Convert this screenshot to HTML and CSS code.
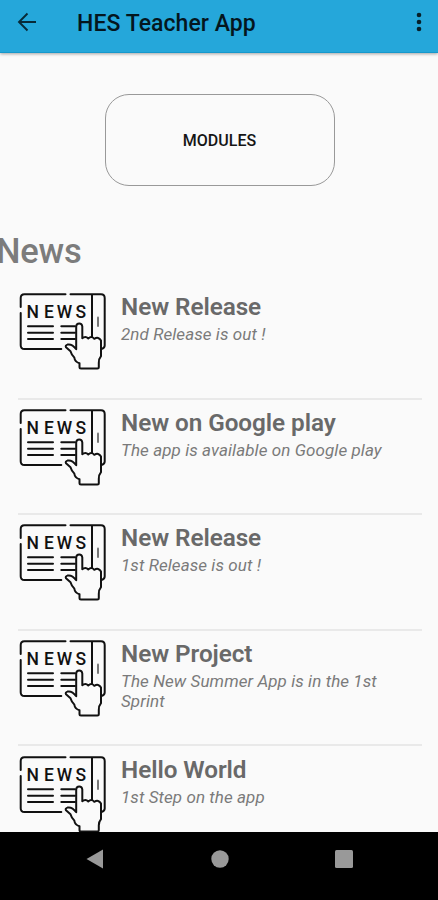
FILE: index.html
```html
<!DOCTYPE html>
<html lang="en">
<head>
<meta charset="utf-8">
<title>HES Teacher App</title>
<link rel="stylesheet" href="styles.css">
</head>
<body>
<svg class="defs" width="0" height="0" aria-hidden="true">
  <symbol id="news-icon" viewBox="0 0 92 82">
    <g fill="none" stroke="#111" stroke-width="2" stroke-linecap="round" stroke-linejoin="round">
      <path d="M3.7 17V8Q3.7 4.3 7.4 4.3H48.5M53.5 4.3H84Q87.7 4.3 87.7 8V55.5Q87.7 58 84.5 59M75 4.3V47M3.7 23V55.2Q3.7 59 7.4 59H44.3"/>
      <path d="M11 36.3H36M11 42.7H36M11 49H36M44.3 36.3H58M44.3 42.7H58M44.3 49H58"/>
      <path stroke="#777" d="M81 27.5V36"/>
      <path fill="#fafafa" d="M59.2 59.2V36.5Q59.4 33.4 62.2 33.4T65.3 36.5V48.3Q68.5 45.6 71.3 48.5Q74.5 45.6 77.3 48.8Q81.5 46.3 84 50.5V66.2Q81.6 69 81.8 73V77Q81.8 78.5 80.3 78.5H64Q62.5 78.5 62.5 77V73.3Q57.8 71.8 57.3 67.5Q54.8 65.5 53.5 61.2L49 57.3Q48 55.5 50.5 54.6Q55 53.6 59.2 59.2Z"/>
    </g>
    <g class="icon-letters"><text x="9.5" y="28">N</text><text x="27" y="28">E</text><text x="39.8" y="28">W</text><text x="58.6" y="28">S</text></g>
  </symbol>
</svg>
<div class="screen">
  <header class="toolbar">
    <svg class="back" width="20" height="20" viewBox="0 0 20 20"><path d="M19 10H2.5M10.5 1.5L2 10L10.5 18.5" fill="none" stroke="#072a38" stroke-width="1.9"/></svg>
    <h1>HES Teacher App</h1>
    <svg class="more" width="6" height="20" viewBox="0 0 6 20" fill="#072029"><circle cx="3" cy="3" r="2.3"/><circle cx="3" cy="10" r="2.3"/><circle cx="3" cy="17" r="2.3"/></svg>
  </header>
  <main>
    <button class="modules">MODULES</button>
    <h2>News</h2>
    <ul class="news">
      <li><svg class="thumb"><use href="#news-icon"/></svg><div><h3>New Release</h3><p>2nd Release is out !</p></div></li>
      <li><svg class="thumb"><use href="#news-icon"/></svg><div><h3>New on Google play</h3><p>The app is available on Google play</p></div></li>
      <li><svg class="thumb"><use href="#news-icon"/></svg><div><h3>New Release</h3><p>1st Release is out !</p></div></li>
      <li><svg class="thumb"><use href="#news-icon"/></svg><div><h3>New Project</h3><p>The New Summer App is in the 1st Sprint</p></div></li>
      <li><svg class="thumb"><use href="#news-icon"/></svg><div><h3>Hello World</h3><p>1st Step on the app</p></div></li>
    </ul>
  </main>
  <nav class="navbar">
    <svg width="20" height="22" viewBox="0 0 20 22"><path d="M1.5 11L18 1.5V20.5Z" fill="#999"/></svg>
    <svg width="20" height="22" viewBox="0 0 20 22"><circle cx="10" cy="11" r="8.7" fill="#999"/></svg>
    <svg width="20" height="22" viewBox="0 0 20 22"><rect x="1" y="2" width="18" height="18" rx="1.5" fill="#999"/></svg>
  </nav>
</div>
</body>
</html>
```
FILE: styles.css
```css
* { box-sizing: border-box; margin: 0; padding: 0; }
body { font-family: Roboto, sans-serif; background: #fafafa; overflow: hidden; }
.defs { display: none; }
.screen { width: 438px; height: 900px; display: flex; flex-direction: column; overflow: hidden; }
.toolbar {
  flex: none; height: 53px; padding: 0 16px 8px 17px; display: flex; align-items: center;
  background: #25a7da; border-bottom: 1px solid #1698cc; box-shadow: 0 1px 3px rgba(0, 0, 0, .35);
}
.toolbar h1 { margin: 4px 0 0 40px; font-size: 23px; letter-spacing: .06px; line-height: 28px; font-weight: 500; color: #04161e; white-space: nowrap; }
.toolbar .more { margin-left: auto; }
main { flex: 1; min-height: 0; overflow: hidden; padding-top: 41px; }
.modules {
  display: block; width: 230px; height: 92px; margin-left: 104.5px;
  border: 1px solid #999; border-radius: 24px; background: #fafafa;
  font: 500 16px Roboto, sans-serif; color: #151515;
}
h2 { margin: 45px 0 0 -4px; font-size: 34.5px; line-height: 40px; font-weight: 500; letter-spacing: -.2px; color: #7c7c7c; }
.news { list-style: none; margin: 12.9px 16px 0 18px; }
.news li { height: 115.65px; padding-top: 6.2px; display: flex; border-bottom: 2px solid #e9e9e9; }
.thumb { flex: none; width: 92px; height: 82px; margin-left: -.6px; }
.news div { margin: 1.9px 0 0 11.6px; width: 280px; }
.news h3 { font-size: 24.3px; letter-spacing: -.06px; line-height: 30px; font-weight: 600; color: #696969; white-space: nowrap; }
.news p { margin-top: 2.2px; font-size: 17px; letter-spacing: .08px; line-height: 20px; font-style: italic; font-weight: 400; color: #7a7a7a; }
.icon-letters { font: 500 17.5px Roboto, sans-serif; fill: #111; }
.navbar { flex: none; height: 68px; background: #000; display: flex; padding: 16px 84px 0 85px; justify-content: space-between; }
```
